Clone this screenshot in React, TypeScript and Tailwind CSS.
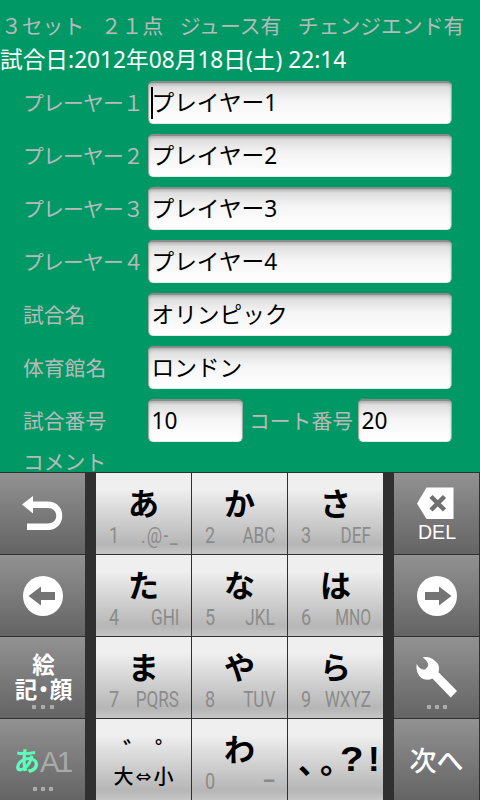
import type { ReactNode } from "react";

const cjk = "font-['Noto_Sans_CJK_JP',sans-serif]";
const mixed = "font-['Noto_Sans','Noto_Sans_CJK_JP',sans-serif]";
const lightKey = "bg-linear-to-b from-[#efefef] from-20% via-[#b6b6b6] via-88% to-[#c6c6c6]";

function Label({ children, className = "" }: { children: ReactNode; className?: string }) {
  return (
    <span className={`${cjk} whitespace-nowrap text-[20.8px] font-normal text-[#b8bab9] ${className}`}>{children}</span>
  );
}

function Field({ value, className = "", caret = false }: { value: string; className?: string; caret?: boolean }) {
  return (
    <div
      className={`${mixed} flex h-[43px] items-center overflow-hidden rounded-[5px] border border-t-2 border-[#a3aaa6] border-t-[#8b8b8b] border-b-[#e4e8e6] bg-linear-to-b from-[#d9d9d9] via-[#f5f5f5] via-45% to-white pl-[2px] text-[22.7px] whitespace-nowrap text-black shadow-[inset_0_2px_3px_rgba(0,0,0,0.18)] ${className}`}
    >
      {caret && <span className="-mr-[2px] h-[32px] w-[2px] shrink-0 bg-black" />}
      <span className="pl-[0.5px] leading-[38px]">{value}</span>
    </div>
  );
}

function KanaKey({ kana, digit, letters, lettersClass = "scale-x-[0.76]" }: { kana: string; digit: string; letters: string; lettersClass?: string }) {
  return (
    <div className={`flex h-[81px] w-[95px] flex-col ${lightKey}`}>
      <div className={`${cjk} mt-[8px] h-[43px] text-center text-[31px] leading-[42px] font-bold text-black`}>{kana}</div>
      <div className="flex h-[22px] justify-between pr-[12px] pl-[13px] font-['Roboto',sans-serif] text-[22.5px] leading-[22px] text-[#8b8b8b]">
        <span className="origin-left scale-x-[0.8]">{digit}</span>
        <span className={`origin-right ${lettersClass}`}>{letters}</span>
      </div>
    </div>
  );
}

function SideKey({ children }: { children: ReactNode }) {
  return (
    <div className="flex h-[81px] w-[85px] flex-col items-center bg-linear-to-b from-[#929292] to-[#646464] text-white">
      {children}
    </div>
  );
}

function Dots({ className = "" }: { className?: string }) {
  return (
    <div className={`flex gap-[4px] ${className}`}>
      <i className="size-[4px] bg-[#aaa]" />
      <i className="size-[4px] bg-[#aaa]" />
      <i className="size-[4px] bg-[#aaa]" />
    </div>
  );
}

function KeyRow({ left, right, children }: { left: ReactNode; right: ReactNode; children: ReactNode }) {
  return (
    <div className="flex h-[81px]">
      {left}
      <div className="mx-[11px] flex gap-px">{children}</div>
      {right}
    </div>
  );
}

export default function App() {
  return (
    <div className="flex h-[800px] w-[480px] flex-col overflow-hidden bg-[#009966]">
      <div className="h-[472px] shrink-0">
        <div className="flex h-[48px] gap-[16.6px] pt-[2px] pl-px leading-[46px]">
          <Label>{"\uff13セット"}</Label>
          <Label>{"\uff12\uff11点"}</Label>
          <Label>ジュース有</Label>
          <Label>チェンジエンド有</Label>
        </div>
        <div className={`${mixed} h-[24px] text-[22.7px] leading-[24px] whitespace-nowrap text-white`}>
          試合日:2012年08月18日(土) 22:14
        </div>
        <div className="mt-[9px] flex flex-col gap-[10px]">
          {[
            ["プレーヤー\uff11", "プレイヤー1"],
            ["プレーヤー\uff12", "プレイヤー2"],
            ["プレーヤー\uff13", "プレイヤー3"],
            ["プレーヤー\uff14", "プレイヤー4"],
            ["試合名", "オリンピック"],
            ["体育館名", "ロンドン"],
          ].map(([label, value], i) => (
            <div key={label} className="flex h-[43px] items-center">
              <Label className={`w-[148px] shrink-0 pl-[23px] ${i < 4 ? "tracking-[-0.8px]" : ""}`}>{label}</Label>
              <Field value={value} className="w-[304px]" caret={i === 0} />
            </div>
          ))}
          <div className="flex h-[43px] items-center">
            <Label className="w-[148px] pl-[23px]">試合番号</Label>
            <Field value="10" className="w-[95px]" />
            <Label className="w-[115px] pl-[6px]">コート番号</Label>
            <Field value="20" className="w-[94px]" />
          </div>
        </div>
        <div className="mt-[4px] h-[26px] pl-[23px] leading-[30px]">
          <Label>コメント</Label>
        </div>
      </div>

      <div className="flex h-[328px] flex-col gap-px bg-[#303030] pt-px">
        <KeyRow
          left={
            <SideKey>
              <svg className="h-[81px] w-[85px]" viewBox="0 0 85 81">
                <path d="M22 31.500 33 23v5.500h15c19 0 19 28.500 0 28.500H27v-6.500h21c11 0 11-15.500 0-15.500H33v5.500z" fill="#fff" />
              </svg>
            </SideKey>
          }
          right={
            <SideKey>
              <svg className="h-[81px] w-[85px]" viewBox="0 0 85 81">
                <path d="M23 30.500 32.500 14.500H59.500V46H32.500z" fill="#fff" />
                <path d="m37 23.500 13.500 13.500m0-13.500L37 37" stroke="#707070" strokeWidth="4.500" />
                <text x="24" y="66" textLength="38" lengthAdjust="spacingAndGlyphs" fontSize="20" fill="#fff" fontFamily="Liberation Sans">DEL</text>
              </svg>
            </SideKey>
          }
        >
          <KanaKey kana="あ" digit="1" letters=".@-_" lettersClass="scale-x-[0.76] tracking-[1.8px]" />
          <KanaKey kana="か" digit="2" letters="ABC" />
          <KanaKey kana="さ" digit="3" letters="DEF" />
        </KeyRow>
        <KeyRow
          left={
            <SideKey>
              <svg className="h-[81px] w-[85px]" viewBox="0 0 85 81">
                <circle cx="43" cy="41" r="20" fill="#fff" />
                <path d="M28.500 41 41 31.500V37h14v8H41v5.500z" fill="#747474" />
              </svg>
            </SideKey>
          }
          right={
            <SideKey>
              <svg className="h-[81px] w-[85px]" viewBox="0 0 85 81">
                <circle cx="43" cy="41" r="20" fill="#fff" />
                <path d="M57.500 41 45 31.500V37H31v8h14v5.500z" fill="#747474" />
              </svg>
            </SideKey>
          }
        >
          <KanaKey kana="た" digit="4" letters="GHI" />
          <KanaKey kana="な" digit="5" letters="JKL" />
          <KanaKey kana="は" digit="6" letters="MNO" lettersClass="scale-x-[0.7]" />
        </KeyRow>
        <KeyRow
          left={
            <SideKey>
              <div className={`${cjk} mt-[14px] h-[54px] w-[85px] pl-[2px] text-center text-[22.5px] leading-[25px] font-bold`}>
                <div>絵</div>
                <div className="flex justify-center">
                  <span>記</span>
                  <span className="-mx-[5px]">・</span>
                  <span>顔</span>
                </div>
              </div>
              <Dots className="gap-[5px]" />
            </SideKey>
          }
          right={
            <SideKey>
              <svg className="h-[68px] w-[85px]" viewBox="0 0 85 68">
                <path d="M28.700 20.500C33 19.200 38 21 41 24c3.500 2.500 5 6 3.500 11.200L63 54l-6.300 6.500L38.500 41.500c-3 1.500-6 1.500-9.200.5C24.500 40 21.500 33.500 22.700 27c1 1.500 2 3.200 3.300 4.200 2 1.400 4 1.700 5.500 1.100l2.500-3c.5-2-.2-3.300-.8-4.300-1.200-2-2.500-3-4.500-4.500z" fill="#fff" />
              </svg>
              <Dots />
            </SideKey>
          }
        >
          <KanaKey kana="ま" digit="7" letters="PQRS" />
          <KanaKey kana="や" digit="8" letters="TUV" />
          <KanaKey kana="ら" digit="9" letters="WXYZ" lettersClass="scale-x-[0.76] -mr-[4px] -translate-x-[4px]" />
        </KeyRow>
        <KeyRow
          left={
            <SideKey>
              <div className="mt-[22px] flex h-[46px] w-[85px] pl-[14px] leading-[38px]">
                <span className={`${cjk} text-[26px] font-bold text-[#5cffba]`}>あ</span>
                <span className="font-['Liberation_Sans',sans-serif] text-[29.500px] leading-[41px] tracking-[-3px] text-[#aaa]">A1</span>
              </div>
              <Dots />
            </SideKey>
          }
          right={
            <SideKey>
              <div className={`${cjk} mt-[21px] text-[27px] leading-[40px] font-medium whitespace-nowrap`}>次へ</div>
            </SideKey>
          }
        >
          <div className={`${cjk} flex h-[81px] w-[95px] flex-col ${lightKey} font-medium text-black`}>
            <div className="mt-[14px] flex h-[28px] gap-[7px] pl-[27px] text-[25px] leading-[32px]">
              <span>゛</span>
              <span>゜</span>
            </div>
            <div className="flex h-[30px] items-center justify-center text-[20px] leading-[32px]">
              <span>大</span>
              <span className="w-[20px] text-center font-['DejaVu_Sans',sans-serif] text-[19px]">⇔</span>
              <span>小</span>
            </div>
          </div>
          <KanaKey kana="わ" digit="0" letters="–" lettersClass="scale-x-90 font-bold" />
          <div className={`${cjk} flex h-[81px] w-[95px] ${lightKey} pl-[10px] text-[32px] leading-[80px] font-bold text-black`}>
            <span className="w-[22px]">、</span>
            <span className="w-[20px]">。</span>
            <span className="w-[28px] origin-left scale-x-110 font-['Liberation_Sans',sans-serif] text-[35px]">?</span>
            <span className="font-['Liberation_Sans',sans-serif] text-[35px]">!</span>
          </div>
        </KeyRow>
      </div>
    </div>
  );
}
